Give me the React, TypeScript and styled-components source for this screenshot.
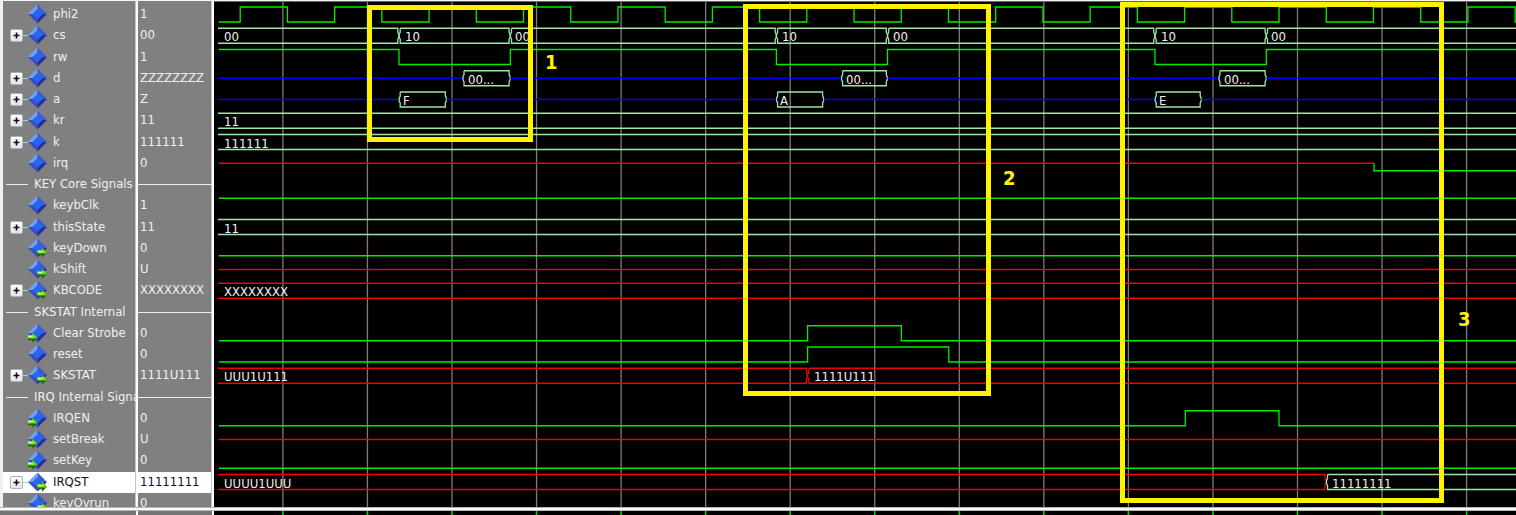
import React from "react";
import styled, { createGlobalStyle, css } from "styled-components";

const font = '"DejaVu Sans Condensed", "DejaVu Sans", "Noto Sans", sans-serif';

const GlobalStyle = createGlobalStyle`
  * { box-sizing: border-box; }
  html, body { margin: 0; background: #000; }
  body { font-family: ${font}; font-size: 13px; overflow: hidden; }
`;

/* ---------- data ---------- */

type Port = "in" | "out";
type Row =
  | { kind: "divider"; label: string }
  | { kind: "signal"; name: string; value: string; bus?: boolean; port?: Port; selected?: boolean };

const rows: Row[] = [
  { kind: "signal", name: "phi2", value: "1" },
  { kind: "signal", name: "cs", value: "00", bus: true },
  { kind: "signal", name: "rw", value: "1" },
  { kind: "signal", name: "d", value: "ZZZZZZZZ", bus: true },
  { kind: "signal", name: "a", value: "Z", bus: true },
  { kind: "signal", name: "kr", value: "11", bus: true },
  { kind: "signal", name: "k", value: "111111", bus: true },
  { kind: "signal", name: "irq", value: "0" },
  { kind: "divider", label: "KEY Core Signals" },
  { kind: "signal", name: "keybClk", value: "1" },
  { kind: "signal", name: "thisState", value: "11", bus: true },
  { kind: "signal", name: "keyDown", value: "0", port: "out" },
  { kind: "signal", name: "kShift", value: "U", port: "out" },
  { kind: "signal", name: "KBCODE", value: "XXXXXXXX", bus: true, port: "out" },
  { kind: "divider", label: "SKSTAT Internal" },
  { kind: "signal", name: "Clear Strobe", value: "0", port: "in" },
  { kind: "signal", name: "reset", value: "0" },
  { kind: "signal", name: "SKSTAT", value: "1111U111", bus: true, port: "out" },
  { kind: "divider", label: "IRQ Internal Signals" },
  { kind: "signal", name: "IRQEN", value: "0", port: "in" },
  { kind: "signal", name: "setBreak", value: "U", port: "in" },
  { kind: "signal", name: "setKey", value: "0", port: "in" },
  { kind: "signal", name: "IRQST", value: "11111111", bus: true, port: "out", selected: true },
  { kind: "signal", name: "keyOvrun", value: "0", port: "out" },
];

/* ---------- layout ---------- */

const Window = styled.main`
  display: flex;
  flex-direction: column;
  height: 100vh;
  border-top: 1px solid #f4f4f4;
`;

const Panes = styled.div`
  display: flex;
  flex: 1;
  min-height: 0;
`;

const SignalPane = styled.section`
  flex: none;
  width: 214px;
  overflow: hidden;
  background: #808080;
  border-left: 3px solid #f0f0f0;
`;

const WavePane = styled.section`
  position: relative;
  flex: 1;
  min-width: 0;
  overflow: hidden;
  background: #000;
  border-top: 1px solid #666;
`;

const Splitter = styled.div`
  height: 4px;
  border: solid #b4b4b4;
  border-width: 1px 0;
  background: #fafafa;
`;

const Footer = styled.footer`
  display: flex;
  height: 4px;
  background: #000;
`;

const FooterCell = styled.div<{ $width: number }>`
  flex: none;
  width: ${(p) => p.$width}px;
  background: #747474;
  border-right: 2px solid #fff;
`;

const FooterTicks = styled.div`
  flex: 1;
  min-width: 0;
`;

/* ---------- signal list ---------- */

const SignalTable = styled.table`
  width: 100%;
  table-layout: fixed;
  border-collapse: separate;
  border-spacing: 0;
  color: #f0f0f0;
`;

const pane = css`
  padding: 0;
  border-right: 2px solid #fff;
  box-shadow: inset -1px 0 #c4c4c4;
`;

const Spacer = styled.td`
  ${pane}
  height: 3px;
`;

const SignalRow = styled.tr<{ $selected?: boolean }>`
  height: 21px;
  &:nth-child(4n + 2) { height: 22px; }
  ${(p) =>
    p.$selected &&
    css`
      background: #fff;
      color: #101018;
    `}
`;

const cell = css`
  ${pane}
  font-weight: normal;
  text-align: left;
  vertical-align: top;
  white-space: nowrap;
  overflow: hidden;
  line-height: 20px;
`;

const NameCell = styled.th`
  ${cell}
`;
const ValueCell = styled.td`
  ${cell}
  padding-left: 2px;
`;

const NameLine = styled.div`
  display: flex;
  align-items: center;
  height: 20px;
  padding-left: 7px;
`;

const DividerLine = styled.div<{ $indent?: boolean }>`
  display: flex;
  align-items: center;
  gap: 6px;
  height: 20px;
  padding-left: ${(p) => (p.$indent ? "3px" : "0")};
`;

const Rule = styled.span<{ $short?: boolean }>`
  display: block;
  flex: none;
  width: ${(p) => (p.$short ? "22px" : "100%")};
  height: 1px;
  background: #ececec;
`;

const ExpandSlot = styled.span`
  display: flex;
  align-items: center;
  flex: none;
  width: 18px;
  height: 20px;
`;

const ExpandButton = styled.button`
  flex: none;
  display: flex;
  align-items: center;
  justify-content: center;
  width: 13px;
  height: 13px;
  padding: 0;
  border: 1px solid #a8b0c4;
  border-radius: 2px;
  background: linear-gradient(#ffffff, #e4e4ec);
`;

const Connector = styled.span`
  flex: 1;
  height: 1px;
  background: #c8c8c8;
`;

const IconBox = styled.svg`
  flex: none;
  display: block;
  width: 19px;
  height: 20px;
  margin-right: 6px;
`;

function SignalIcon({ port }: { port?: Port }) {
  return (
    <IconBox viewBox="0 0 19 20" aria-hidden="true">
      <path d="M9.5 0.5 L0 10 L5 10 L9.5 5.5 Z" fill="#72a2f2" />
      <path d="M9.5 0.5 L19 10 L14 10 L9.5 5.5 Z" fill="#3c5cd4" />
      <path d="M9.5 19.5 L0 10 L5 10 L9.5 14.5 Z" fill="#3a4cc0" />
      <path d="M9.5 19.5 L19 10 L14 10 L9.5 14.5 Z" fill="#2a2a9c" />
      <path d="M9.5 4.9 L14.6 10 L9.5 15.1 L4.4 10 Z" fill="#2468f2" />
      {port && (
        <g transform={port === "out" ? "translate(9.6 9.6)" : "translate(0 9.6)"}>
          <path d="M0 3 H4.4 V0 L9.4 5.2 L4.4 10.2 V7.6 H0 Z" fill="#176a06" />
          <path d="M0 3 H4.4 V0.2 L9.2 5 L8.2 6 H0 Z" fill="#6fe014" />
          <path d="M0 3 H5 V4.6 H0 Z" fill="#d8ff98" />
        </g>
      )}
    </IconBox>
  );
}

function SignalList() {
  return (
    <SignalTable aria-label="Signals">
      <colgroup>
        <col width={135} />
        <col width={76} />
      </colgroup>
      <thead>
        <tr>
          <Spacer />
          <Spacer />
        </tr>
      </thead>
      <tbody>
        {rows.map((row) =>
          row.kind === "divider" ? (
            <SignalRow key={row.label}>
              <NameCell scope="row">
                <DividerLine $indent>
                  <Rule $short />
                  {row.label}
                </DividerLine>
              </NameCell>
              <NameCell as="td">
                <DividerLine>
                  <Rule />
                </DividerLine>
              </NameCell>
            </SignalRow>
          ) : (
            <SignalRow key={row.name} $selected={row.selected}>
              <NameCell scope="row">
                <NameLine>
                  <ExpandSlot>
                    {row.bus && (
                      <>
                        <ExpandButton type="button" aria-label={`Expand ${row.name}`}>
                          <svg width="7" height="7" viewBox="0 0 7 7" aria-hidden="true">
                            <path d="M0.5 3.5 H6.5 M3.5 0.5 V6.5" stroke="#101010" strokeWidth="1.6" />
                          </svg>
                        </ExpandButton>
                        <Connector />
                      </>
                    )}
                  </ExpandSlot>
                  <SignalIcon port={row.port} />
                  {row.name}
                </NameLine>
              </NameCell>
              <ValueCell>{row.value}</ValueCell>
            </SignalRow>
          )
        )}
      </tbody>
    </SignalTable>
  );
}

/* ---------- wave forms ---------- */

const ORIGIN_X = 214;
const ORIGIN_Y = 2;
const END = 4000;

const GREEN = "#00ec00";
const RED = "#f00000";
const BLUE = "#0000f0";
const PALE = "#9fe6a4";

const laneHigh = (lane: number) => 7 + 21.25 * lane;
const laneMid = (lane: number) => laneHigh(lane) + 7.5;
const laneLow = (lane: number) => laneHigh(lane) + 15;

const Chart = styled.svg`
  display: block;
  width: 100%;
  height: 100%;
`;

const Trace = styled.path<{ $color: string }>`
  fill: none;
  stroke: ${(p) => p.$color};
  stroke-width: 1.3;
`;

const WaveText = styled.text`
  fill: #f0f0f0;
  font-family: ${font};
  font-size: 13px;
`;

/* A two-level signal that toggles at each given x. */
function Bit({ lane, start = "low", edges = [] }: { lane: number; start?: "low" | "high"; edges?: number[] }) {
  let high = start === "high";
  let d = `M219 ${high ? laneHigh(lane) : laneLow(lane)}`;
  for (const x of edges) {
    high = !high;
    d += ` H${x} V${high ? laneHigh(lane) : laneLow(lane)}`;
  }
  return <Trace $color={GREEN} d={`${d} H${END}`} />;
}

function Level({ lane, color, from = 219, to = END }: { lane: number; color: string; from?: number; to?: number }) {
  return <Trace $color={color} d={`M${from} ${laneMid(lane)} H${to}`} />;
}

/* One value span of a bus, with notched ends where the value changes. */
function Span({
  lane,
  from = 218,
  to = END,
  label,
  color = PALE,
  inset = 6,
}: {
  lane: number;
  from?: number;
  to?: number;
  label?: string;
  color?: string;
  inset?: number;
}) {
  const top = laneHigh(lane);
  const bottom = laneLow(lane);
  const open = from === 218;
  const left = open ? from : from + 1.2;
  const right = to - 1.2;
  let d = `M${left} ${top} H${right} v4 l1 2 v3 l-1 2 V${bottom} H${left}`;
  if (!open) d += ` v-4 l-1 -2 v-3 l1 -2 V${top}`;
  return (
    <>
      <Trace $color={color} d={d} />
      {label && (
        <WaveText x={Math.round(from + inset)} y={Math.round(top + 13)}>
          {label}
        </WaveText>
      )}
    </>
  );
}

const clockEdges = Array.from({ length: 80 }, (_, k) => 240.2 + 47.22 * k);
const gridLines = Array.from({ length: 44 }, (_, k) => 282.9 + 84.55 * k);

/* Start of each bus access, and the later points inside it. */
const accesses = [
  { start: 399, data: 462.8, addressEnd: 446.5, end: 510.3, address: "F" },
  { start: 776.4, data: 841.4, addressEnd: 823.8, end: 887.5, address: "A" },
  { start: 1155, data: 1218.8, addressEnd: 1201.4, end: 1266.3, address: "E" },
];

function Waves() {
  return (
    <Chart role="img" aria-label="Wave forms">
      <g transform={`translate(${-ORIGIN_X} ${-ORIGIN_Y})`}>
        {gridLines.map((x) => (
          <path key={x} d={`M${x} 0 V2000`} stroke="#7c7c7c" strokeWidth="1.3" />
        ))}

        <Bit lane={0} edges={clockEdges} />

        <Span lane={1} to={accesses[0].start} label="00" />
        {accesses.map((a, i) => (
          <React.Fragment key={a.start}>
            <Span lane={1} from={a.start} to={a.end} label="10" />
            <Span lane={1} from={a.end} to={accesses[i + 1]?.start} label="00" inset={5} />
          </React.Fragment>
        ))}

        <Bit lane={2} start="high" edges={accesses.flatMap((a) => [a.start, a.end])} />

        {accesses.map((a, i) => (
          <React.Fragment key={a.start}>
            <Level lane={3} color={BLUE} from={i ? accesses[i - 1].end : 218} to={a.data} />
            <Span lane={3} from={a.data} to={a.end} label="00..." inset={5} />
            <Level lane={4} color={BLUE} from={i ? accesses[i - 1].addressEnd : 218} to={a.start} />
            <Span lane={4} from={a.start} to={a.addressEnd} label={a.address} inset={4} />
          </React.Fragment>
        ))}
        <Level lane={3} color={BLUE} from={accesses[2].end} />
        <Level lane={4} color={BLUE} from={accesses[2].addressEnd} />

        <Span lane={5} label="11" />
        <Span lane={6} label="111111" />

        <Level lane={7} color={RED} to={1374} />
        <Trace $color={GREEN} d={`M1374 ${laneMid(7)} V${laneLow(7)} H${END}`} />

        <Bit lane={9} start="high" />
        <Span lane={10} label="11" />
        <Bit lane={11} />
        <Level lane={12} color={RED} />
        <Span lane={13} label="XXXXXXXX" color={RED} />

        <Bit lane={15} edges={[807.6, 901.4]} />
        <Bit lane={16} edges={[807.6, 948.8]} />
        <Span lane={17} to={807.6} label="UUU1U111" color={RED} />
        <Span lane={17} from={807.6} label="1111U111" color={RED} />

        <Bit lane={19} edges={[1185.3, 1279]} />
        <Level lane={20} color={RED} />
        <Bit lane={21} />
        <Span lane={22} to={1326.3} label="UUUU1UUU" color={RED} />
        <Span lane={22} from={1326.3} label="11111111" />
      </g>
    </Chart>
  );
}

function Ticks() {
  return (
    <Chart aria-hidden="true">
      <g transform={`translate(${-ORIGIN_X} 0)`}>
        {gridLines.map((x) => (
          <path key={x} d={`M${x} 0 V10`} stroke="#00d400" strokeWidth="1.6" />
        ))}
      </g>
    </Chart>
  );
}

/* ---------- annotations over the wave forms ---------- */

const Highlight = styled.div<{ $x: number; $y: number; $w: number; $h: number }>`
  position: absolute;
  left: ${(p) => p.$x - ORIGIN_X}px;
  top: ${(p) => p.$y - ORIGIN_Y}px;
  width: ${(p) => p.$w}px;
  height: ${(p) => p.$h}px;
  border: 5px solid #fff200;
`;

const Callout = styled.span<{ $x: number; $y: number }>`
  position: absolute;
  left: ${(p) => p.$x - ORIGIN_X}px;
  top: ${(p) => p.$y - ORIGIN_Y}px;
  color: #fff200;
  font-size: 20px;
  font-weight: bold;
  line-height: 24px;
`;

export default function App() {
  return (
    <>
      <GlobalStyle />
      <Window>
        <Panes>
          <SignalPane>
            <SignalList />
          </SignalPane>
          <WavePane>
            <Waves />
            <Highlight $x={367} $y={5} $w={166} $h={137} />
            <Callout $x={545} $y={50}>1</Callout>
            <Highlight $x={743} $y={4} $w={248} $h={392} />
            <Callout $x={1003} $y={166}>2</Callout>
            <Highlight $x={1120} $y={2} $w={324} $h={501} />
            <Callout $x={1458} $y={307}>3</Callout>
          </WavePane>
        </Panes>
        <Splitter />
        <Footer>
          <FooterCell $width={138} />
          <FooterCell $width={76} />
          <FooterTicks>
            <Ticks />
          </FooterTicks>
        </Footer>
      </Window>
    </>
  );
}
